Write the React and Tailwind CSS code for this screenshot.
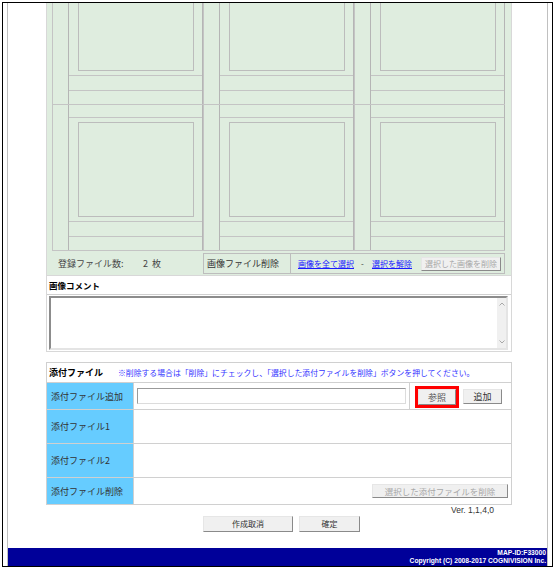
import React from 'react';

const btn =
  "flex items-center justify-center bg-[#f0f0f0] border border-t-[#e6e6e6] border-l-[#e6e6e6] border-r-[#8a8a8a] border-b-[#8a8a8a] leading-none";

function Tile() {
  return (
    <div className="w-[151px] flex border-l border-[#c4c4c4]">
      <div className="w-[15px]" />
      <div className="w-[135px] border-x border-[#b5b5b5] flex flex-col">
        <div className="h-[13px] border-b border-[#c4c4c4]" />
        <div className="pt-[4px] pl-[9px] pr-[8px]">
          <div className="h-[95px] border border-[#bcbcbc]" />
        </div>
        <div className="h-[5px] border-b border-[#c4c4c4]" />
        <div className="h-[15px] border-b border-[#c4c4c4]" />
        <div className="h-[13px]" />
      </div>
    </div>
  );
}

function Chevron({ up }) {
  return (
    <svg width="6" height="4" viewBox="0 0 6 4">
      <path
        d={up ? "M0.5 3.5 L3 1 L5.5 3.5" : "M0.5 0.5 L3 3 L5.5 0.5"}
        fill="none"
        stroke="#a8a8a8"
        strokeWidth="1"
      />
    </svg>
  );
}

export default function App() {
  return (
    <div className="w-[558px] h-[573px] bg-white pt-[2px] pl-[2px] font-['Noto_Sans_CJK_JP',sans-serif] text-[#333]">
      <div className="w-[551px] h-[565px] border border-black">
        <div className="ml-[4px] w-[541px] h-full border-x border-[#c0c0c0] flex flex-col">
          <div className="ml-[38px] w-[466px]">
            {/* Gallery */}
            <div className="border-x border-b border-[#d8d8d8] bg-[#dfeddf] pl-[5px] pr-[6px]">
              <div className="h-[248px] overflow-hidden">
                <div className="-mt-[45px]">
                  <div className="flex border-t border-[#c4c4c4]">
                    <Tile />
                    <Tile />
                    <Tile />
                  </div>
                  <div className="flex border-y border-[#c4c4c4]">
                    <Tile />
                    <Tile />
                    <Tile />
                  </div>
                </div>
              </div>
              <div className="h-[24px] flex items-start">
                <div className="w-[151px] h-full flex items-center pl-[6px] text-[9px] leading-none text-[#444]">
                  <span className="w-[85px]">登録ファイル数:</span>
                  <span className="w-[9px]">2</span>
                  <span>枚</span>
                </div>
                <div className="mt-[2px] h-[21px] w-[302px] flex border border-[#bdbdbd]">
                  <div className="w-[87px] border-r border-[#bdbdbd] pl-[3px] flex items-center text-[9px] leading-none text-[#333]">
                    画像ファイル削除
                  </div>
                  <div className="flex-1 flex items-center pl-[7px] text-[8px] leading-none">
                    <span className="w-[63px]">
                      <a className="text-[#1a1aff] underline">画像を全て選択</a>
                    </span>
                    <span className="w-[11px] text-[#333]">-</span>
                    <span className="w-[49px]">
                      <a className="text-[#1a1aff] underline">選択を解除</a>
                    </span>
                    <div className={btn + " w-[80px] h-[14px] text-[8px] text-[#a8a8a8]"}>
                      選択した画像を削除
                    </div>
                  </div>
                </div>
              </div>
            </div>

            {/* Comment */}
            <div className="border-x border-b border-[#d8d8d8]">
              <div className="h-[19px] border-b border-[#d0d0d0] pl-[2px] flex items-center text-[8.5px] font-bold text-black leading-none">
                画像コメント
              </div>
              <div className="pl-[2px] pr-[3px] pt-[1px] pb-[1px]">
                <div className="h-[54px] flex border-2 border-t-[#8c8c8c] border-l-[#8c8c8c] border-r-[#e4e4e4] border-b-[#e4e4e4] bg-white">
                  <div className="flex-1" />
                  <div className="w-[9px] bg-[#f0f0f0] flex flex-col justify-between items-center pt-[4px] pb-[4px]">
                    <Chevron up />
                    <Chevron />
                  </div>
                </div>
              </div>
            </div>

            {/* Attachments */}
            <div className="mt-[10px] border border-[#d0d0d0]">
              <div className="h-[20px] border-b border-[#d0d0d0] flex items-center pl-[2px] leading-none">
                <span className="w-[69px] text-[9px] font-bold text-black">添付ファイル</span>
                <span className="text-[7.85px] text-[#3333ff]">
                  ※削除する場合は「削除」にチェックし、「選択した添付ファイルを削除」ボタンを押してください。
                </span>
              </div>
              <div className="h-[27px] border-b border-[#d0d0d0] flex">
                <div className="w-[87px] bg-[#66ccff] border-r border-[#d0d0d0] flex items-center pl-[4px] text-[9px] leading-none">
                  添付ファイル追加
                </div>
                <div className="w-[276px] border-r border-[#d0d0d0] flex items-center pl-[3px]">
                  <div className="w-[269px] h-[16px] border border-[#9a9a9a] border-r-[#dcdcdc] border-b-[#dcdcdc] bg-white" />
                </div>
                <div className="flex-1 flex items-center pl-[5px]">
                  <div className="w-[44px] h-[22px] border-[3px] border-[#ff0000] mt-[2px]">
                    <div className={btn + " w-full h-full text-[9px] text-[#555]"}>参照</div>
                  </div>
                  <div className={btn + " ml-[4px] w-[39px] h-[15px] text-[9px] text-[#333]"}>追加</div>
                </div>
              </div>
              <div className="h-[34px] border-b border-[#d0d0d0] flex">
                <div className="w-[87px] bg-[#66ccff] border-r border-[#d0d0d0] flex items-center pl-[4px] text-[9px] leading-none">
                  添付ファイル1
                </div>
                <div className="flex-1" />
              </div>
              <div className="h-[34px] border-b border-[#d0d0d0] flex">
                <div className="w-[87px] bg-[#66ccff] border-r border-[#d0d0d0] flex items-center pl-[4px] text-[9px] leading-none">
                  添付ファイル2
                </div>
                <div className="flex-1" />
              </div>
              <div className="h-[26px] flex">
                <div className="w-[87px] bg-[#66ccff] border-r border-[#d0d0d0] flex items-center pl-[4px] text-[9px] leading-none">
                  添付ファイル削除
                </div>
                <div className="flex-1 flex items-center justify-end pr-[3px]">
                  <div className={btn + " w-[136px] h-[14px] text-[8.5px] text-[#a8a8a8]"}>
                    選択した添付ファイルを削除
                  </div>
                </div>
              </div>
            </div>

            <div className="h-[11px] flex items-center justify-end pr-[18px] font-['Liberation_Sans',sans-serif] text-[8.5px] leading-none text-[#333]">
              Ver. 1,1,4,0
            </div>
            <div className="h-[16px] flex pl-[157px] gap-[6px]">
              <div className={btn + " w-[90px] h-[16px] text-[8px] text-[#333]"}>作成取消</div>
              <div className={btn + " w-[61px] h-[16px] text-[8px] text-[#333]"}>確定</div>
            </div>
          </div>

          <div className="mt-auto h-[18px] bg-[#000099] text-white font-bold font-['Liberation_Sans',sans-serif] text-[6.7px] leading-[8px] text-right pr-[1px] pt-[1px]">
            <div>MAP-ID:F33000</div>
            <div>Copyright (C) 2008-2017 COGNIVISION Inc.</div>
          </div>
        </div>
      </div>
    </div>
  );
}
